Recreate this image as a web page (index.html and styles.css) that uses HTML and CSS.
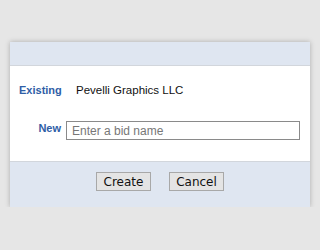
FILE: index.html
```html
<!DOCTYPE html>
<html>
<head>
    <title>New Bid</title>
    <link rel="stylesheet" href="styles.css">
</head>
<body>

<div class="dialog">
    <div class="dialog-header"></div>
    <div class="dialog-body">
        <div class="field-row">
            <span class="field-label">Existing</span>
            <span class="field-value">Pevelli Graphics LLC</span>
        </div>
        <div class="field-row new-row">
            <label class="field-label" for="bidName">New</label>
            <input type="text" id="bidName" class="bid-input" placeholder="Enter a bid name">
        </div>
    </div>
    <div class="dialog-footer">
        <button class="btn">Create</button>
        <button class="btn">Cancel</button>
    </div>
</div>

</body>
</html>
```

FILE: styles.css
```css
body {
    margin: 0;
    padding: 42px 10px 0;
    background: #e6e6e6;
    font-family: 'Liberation Sans', Arial, sans-serif;
    font-size: 12px;
    color: #111;
}

.dialog {
    width: 300px;
    background: #fff;
    box-shadow: 0 0 5px rgba(0, 0, 0, 0.25);
}

.dialog-header {
    height: 23px;
    background: #dfe6f1;
    border-bottom: 1px solid #d2d6dc;
}

.dialog-body {
    height: 95px;
    padding-left: 9px;
}

.field-row {
    display: grid;
    grid-template-columns: 42px 1fr;
    column-gap: 5px;
    align-items: center;
}

.field-row:first-child {
    padding-top: 18px;
}

.new-row {
    margin-top: 25px;
    align-items: start;
}

.field-label {
    text-align: right;
    font-size: 11px;
    font-weight: bold;
    color: #2f5ea6;
}

.new-row .field-label {
    padding-top: 1px;
}

.field-value {
    padding-left: 10px;
    font-size: 11.5px;
}

.bid-input {
    width: 234px;
    height: 19px;
    box-sizing: border-box;
    margin: 0;
    padding: 0 5px;
    border: 1px solid #8a8a8a;
    font-family: 'Liberation Sans', Arial, sans-serif;
    font-size: 12px;
}

.bid-input::placeholder {
    color: #777;
}

.dialog-footer {
    height: 46px;
    box-sizing: border-box;
    padding-top: 10px;
    background: #dfe6f1;
    border-top: 1px solid #d2d6dc;
    display: flex;
    justify-content: center;
    gap: 18px;
}

.btn {
    width: 55px;
    height: 19px;
    padding: 0;
    background: #e4e4e4;
    border: 1px solid #a8a8a8;
    font-family: 'DejaVu Sans', sans-serif;
    font-size: 12px;
    color: #111;
}
```
